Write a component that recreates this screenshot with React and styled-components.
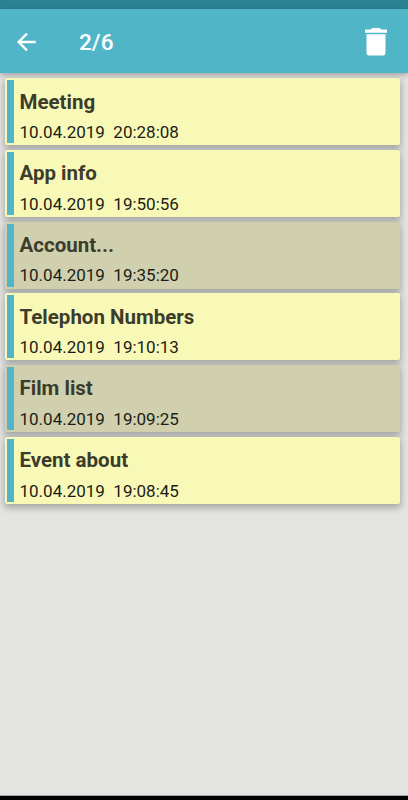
import React from "react";
import styled, { createGlobalStyle, css } from "styled-components";

const GlobalStyle = createGlobalStyle`
  * {
    box-sizing: border-box;
  }

  body {
    margin: 0;
    font-family: Roboto, sans-serif;
  }
`;

const Screen = styled.div`
  display: flex;
  flex-direction: column;
  height: 800px;
  overflow: hidden;
  background: #e4e4e2;
`;

const StatusBar = styled.div`
  flex: none;
  height: 9.4px;
  background: #2a8393;
`;

const Toolbar = styled.header`
  flex: none;
  display: flex;
  align-items: center;
  height: 64.1px;
  padding: 1px 21px 0 16px;
  background: #51b5c8;
  color: #fff;
  box-shadow: 0 2px 5px rgba(0, 0, 0, 0.28);
`;

const Counter = styled.h1`
  flex: 1;
  margin: 2px 0 0 41px;
  font-size: 22.6px;
  font-weight: 500;
  line-height: 28px;
`;

const IconButton = styled.button`
  display: flex;
  padding: 0;
  border: 0;
  background: none;
  color: inherit;
`;

const NoteList = styled.ul`
  flex: 1;
  display: flex;
  flex-direction: column;
  gap: 4.7px;
  margin: 0;
  padding: 4.8px 8px 0 5px;
  list-style: none;
`;

const Note = styled.li`
  display: flex;
  flex: none;
  height: 67px;
  padding: 2px;
  border-radius: 2px;
  background: #f9f9b7;
  box-shadow: 0 3px 7px 1px rgba(0, 0, 0, 0.28);

  ${props => props.$selected && css`
    background: #d0d0ae;
  `}
`;

const Stripe = styled.div`
  width: 7px;
  background: #51b5c8;
`;

const NoteBody = styled.div`
  padding-left: 5.5px;
`;

const Title = styled.div`
  margin-top: 8.4px;
  font-size: 20.5px;
  font-weight: 700;
  line-height: 26px;
  color: #3c3c2c;
`;

const DateLine = styled.div`
  margin-top: 6.4px;
  font-size: 17px;
  line-height: 22px;
  color: #1c1c18;
  white-space: pre;
`;

const NavigationBar = styled.div`
  flex: none;
  height: 5px;
  border-top: 1px solid #a3a3a2;
  background: #000;
`;

const notes = [
  { title: "Meeting", date: "10.04.2019", time: "20:28:08" },
  { title: "App info", date: "10.04.2019", time: "19:50:56" },
  { title: "Account...", date: "10.04.2019", time: "19:35:20", selected: true },
  { title: "Telephon Numbers", date: "10.04.2019", time: "19:10:13" },
  { title: "Film list", date: "10.04.2019", time: "19:09:25", selected: true },
  { title: "Event about", date: "10.04.2019", time: "19:08:45" },
];

function BackIcon() {
  return (
    <svg width="22" height="22" viewBox="0 0 22 22" fill="none" stroke="currentColor" strokeWidth="2.3">
      <path d="M19.7 11H3M11 2.6L2.6 11l8.4 8.4" />
    </svg>
  );
}

function TrashIcon() {
  return (
    <svg width="22" height="30" viewBox="0 0 22 30" fill="currentColor">
      <path d="M0 2.4h5.7L7.3.9h7.4l1.6 1.5H22v3.3H0zM1.5 7.2h19V25.4a3.2 3.2 0 0 1-3.2 3.2H4.7a3.2 3.2 0 0 1-3.2-3.2z" />
    </svg>
  );
}

function NoteItem({ note }) {
  return (
    <Note $selected={note.selected}>
      <Stripe />
      <NoteBody>
        <Title>{note.title}</Title>
        <DateLine>{`${note.date}  ${note.time}`}</DateLine>
      </NoteBody>
    </Note>
  );
}

export default function App() {
  const selectedCount = notes.filter(note => note.selected).length;

  return (
    <Screen>
      <GlobalStyle />
      <StatusBar />
      <Toolbar>
        <IconButton aria-label="Back">
          <BackIcon />
        </IconButton>
        <Counter>{selectedCount}/{notes.length}</Counter>
        <IconButton aria-label="Delete">
          <TrashIcon />
        </IconButton>
      </Toolbar>
      <NoteList>
        {notes.map(note => (
          <NoteItem key={note.time} note={note} />
        ))}
      </NoteList>
      <NavigationBar />
    </Screen>
  );
}
